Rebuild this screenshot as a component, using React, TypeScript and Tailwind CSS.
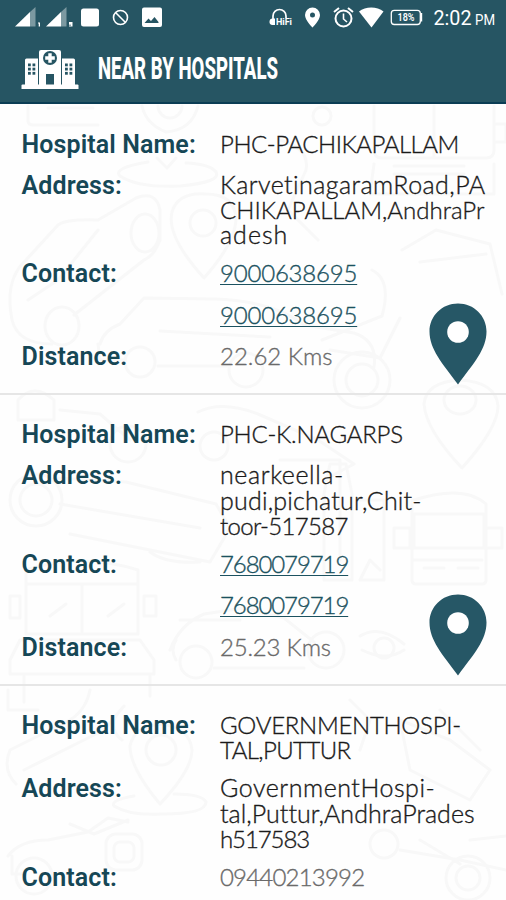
import { type ReactNode } from "react"
import { clsx } from "clsx"

type Line = { text: string; tracking?: string }
type Row = { label: string; lines: Line[]; kind?: "link" | "muted" }
type Hospital = { id: number; rows: Row[]; pin: boolean }

const hospitals: Hospital[] = [
  {
    id: 1,
    pin: true,
    rows: [
      { label: "Hospital Name:", lines: [{ text: "PHC-PACHIKAPALLAM", tracking: "tracking-[-0.480px]" }] },
      {
        label: "Address:",
        lines: [
          { text: "KarvetinagaramRoad,PA", tracking: "text-[25px] tracking-[0.430px]" },
          { text: "CHIKAPALLAM,AndhraPr", tracking: "tracking-[0.020px]" },
          { text: "adesh", tracking: "text-[25px] tracking-[1px]" },
        ],
      },
      { label: "Contact:", kind: "link", lines: [{ text: "9000638695", tracking: "tracking-[-0.200px]" }] },
      { label: "", kind: "link", lines: [{ text: "9000638695", tracking: "tracking-[-0.200px]" }] },
      { label: "Distance:", kind: "muted", lines: [{ text: "22.62 Kms" }] },
    ],
  },
  {
    id: 2,
    pin: true,
    rows: [
      { label: "Hospital Name:", lines: [{ text: "PHC-K.NAGARPS", tracking: "tracking-[-0.250px]" }] },
      {
        label: "Address:",
        lines: [
          { text: "nearkeella-", tracking: "text-[25px] tracking-[0.600px]" },
          { text: "pudi,pichatur,Chit-", tracking: "text-[25px] tracking-[0.200px]" },
          { text: "toor-517587", tracking: "tracking-[-0.650px]" },
        ],
      },
      { label: "Contact:", kind: "link", lines: [{ text: "7680079719", tracking: "tracking-[-1.100px]" }] },
      { label: "", kind: "link", lines: [{ text: "7680079719", tracking: "tracking-[-1.100px]" }] },
      { label: "Distance:", kind: "muted", lines: [{ text: "25.23 Kms", tracking: "tracking-[-0.200px]" }] },
    ],
  },
  {
    id: 3,
    pin: false,
    rows: [
      {
        label: "Hospital Name:",
        lines: [
          { text: "GOVERNMENTHOSPI-", tracking: "tracking-[-0.280px]" },
          { text: "TAL,PUTTUR", tracking: "tracking-[-0.600px]" },
        ],
      },
      {
        label: "Address:",
        lines: [
          { text: "GovernmentHospi-", tracking: "text-[25px] tracking-[0.540px]" },
          { text: "tal,Puttur,AndhraPrades", tracking: "text-[25px] tracking-[0.020px]" },
          { text: "h517583", tracking: "tracking-[-1.100px]" },
        ],
      },
      { label: "Contact:", kind: "muted", lines: [{ text: "09440213992", tracking: "tracking-[-0.800px]" }] },
    ],
  },
]

function StatusBar() {
  return (
    <svg viewBox="0 0 506 36" className="block h-9 w-full" fill="none">
      <g fill="#fff">
        <path d="M15 26.5 30 12v14.5z" />
        <path d="M30 12l5.5-5v19.5H30z" opacity=".4" />
        <path d="M46 26.5 61 12v14.5z" />
        <path d="M61 12l5.5-5v19.5H61z" opacity=".4" />
        <path d="M38 22.5h2v4h-1.3v-3H38zM69 22h3.500v4.500H69v-1h2v-.8h-2z" />
        <rect x="81" y="8.500" width="18" height="18" rx="2.500" />
        <path
          fillRule="evenodd"
          d="M144 7.500h16a2 2 0 0 1 2 2v15.500a2 2 0 0 1-2 2h-16a2 2 0 0 1-2-2V9.500a2 2 0 0 1 2-2zm.5 15.500h14v-1l-4-5-3.500 4-2.500-2.500z"
        />
        <path
          fillRule="evenodd"
          d="M312.500 7.500a7.500 7.500 0 0 0-7.500 7.500c0 5.400 7.500 12.500 7.500 12.500s7.500-7.100 7.500-12.500a7.500 7.500 0 0 0-7.500-7.500zm0 5a2.500 2.500 0 1 1 0 5 2.500 2.500 0 0 1 0-5z"
        />
        <path d="M359 11.500c6.500-5.500 18-5.500 24.500 0L371.500 27.500z" />
        <path d="M420.500 13h1.700v8.500h-1.700z" />
        <path d="M273 18.500h2v6.500h-2.500a3 3 0 0 1 .5-6.500z" />
      </g>
      <g stroke="#fff">
        <circle cx="120.500" cy="17.500" r="7" strokeWidth="1.600" />
        <path d="m115.500 12.500 10 10" strokeWidth="1.600" />
        <path d="M273 20v-4a6.500 6.500 0 0 1 13 0v2" strokeWidth="1.700" />
        <circle cx="343.500" cy="18.500" r="8" strokeWidth="2" />
        <path d="M343.500 13.500v5.500l3.500 3" strokeWidth="1.600" />
        <path d="m334 12 5-4M353 12l-5-4" strokeWidth="2" />
        <rect x="391.300" y="10.300" width="29" height="14.200" rx="3" strokeWidth="1.300" />
      </g>
      <g fill="#fff" fontFamily="Roboto, sans-serif">
        <text x="276" y="24.800" fontSize="8.500" fontWeight="700" textLength="16" lengthAdjust="spacingAndGlyphs">
          HiFi
        </text>
        <text x="397.500" y="21" fontSize="10" fontWeight="600" textLength="17" lengthAdjust="spacingAndGlyphs">
          18%
        </text>
        <text x="433.500" y="25.300" fontSize="20" textLength="38" lengthAdjust="spacingAndGlyphs">
          2:02
        </text>
        <text x="475" y="25.300" fontSize="14" textLength="20" lengthAdjust="spacingAndGlyphs">
          PM
        </text>
      </g>
    </svg>
  )
}

function HospitalIcon() {
  return (
    <svg viewBox="0 0 58 40" className="h-10 w-[58px]" fill="#fff">
      <path d="M18 3a2 2 0 0 1 2-2h18a2 2 0 0 1 2 2v33H18z" />
      <path d="M4 11q0-1.500 1.500-1.500H17V36H4zM41 9.500h11.500Q54 9.500 54 11v25H41z" />
      <path d="M1.500 35.500h55q1 0 1 1V40H.5v-3.500q0-1 1-1z" />
      <circle cx="29" cy="9" r="7" fill="#265563" />
      <path d="M27.300 4.200h3.400v3.100h3.100v3.400h-3.100v3.100h-3.400v-3.100h-3.100V7.300h3.100z" />
      <g fill="#265563">
        <path d="M25 25h8v10.500h-8z" />
        {[14.5, 18.7, 22.9].map((y) => (
          <g key={y}>
            <rect x="7" y={y} width="2.800" height="2.800" />
            <rect x="11.500" y={y} width="2.800" height="2.800" />
            <rect x="44" y={y} width="2.800" height="2.800" />
            <rect x="48.500" y={y} width="2.800" height="2.800" />
          </g>
        ))}
      </g>
    </svg>
  )
}

function Pin() {
  return (
    <svg viewBox="0 0 58 82" className="absolute right-[19.500px] bottom-[8px] h-[82px] w-[58px]">
      <path
        fill="#265766"
        d="M29 .5C13 .5.500 13 .500 28.500.500 46 13 60 29 81.500 45 60 57.500 46 57.500 28.500 57.500 13 45 .500 29 .500z"
      />
      <circle cx="29" cy="29" r="10.800" fill="#fff" />
    </svg>
  )
}

// faint traffic doodles behind the list
function Doodles() {
  return (
    <svg
      viewBox="0 104 506 796"
      className="absolute inset-0 h-full w-full"
      fill="none"
      stroke="#f8f8f8"
      strokeWidth="3"
      strokeLinecap="round"
      strokeLinejoin="round"
    >
      <path d="M28 106v15q0 4 6 4h64M48 108h45M142 106q4 18 24 26 26-2 32-26M158 106a12 12 0 0 0 24 0" />
      <path d="M148 162q-36 6-28 14 18 12 60 10 42-4 36-14-6-8-30-9M157 158l10 10 9-10" />
      <path d="M12 320q-8-40 14-60l32-35q8-6 40-5l38-22q20-8 24 12v30q-6 16-16 20l-70 55M28 300l30-20 40-50M12 320q6 24 40 24" />
      <ellipse cx="62" cy="326" rx="17" ry="19" />
      <ellipse cx="145" cy="233" rx="14" ry="19" />
      <path d="M204 278q-38-42-32-66 6-20 34-18 28 0 30 24 0 24-32 60z" />
      <circle cx="203" cy="223" r="13" />
      <path d="M100 344q4-14 20-20l24-26 70 1q60 2 90 26l50 8q24 8 20 34M160 331l110 6M158 366h70M98 344l2 16h25" />
      <circle cx="140" cy="362" r="15" />
      <circle cx="246" cy="370" r="17" />
      <path d="M374 106v44q0 8 8 8h104q8 0 8-8v-44M434 106v50M374 164l-4 30h124v-30M394 166h70M394 174h70M496 124h10v18h-10" />
      <circle cx="322" cy="116" r="9" />
      <path d="M280 140q30 8 26 30l-18 40 30 30M402 250l34-20 54 14 12 50M420 262l66-8M372 270q20 10 10 46l-60 24M330 350l50 8 20-40" />
      <circle cx="362" cy="380" r="28" />
      <circle cx="362" cy="380" r="16" />
      <path d="M462 468q-36-38-38-64 2-22 36-24 36 2 38 26 0 22-36 62zM476 400a16 14 0 1 1-32 0 16 14 0 0 1 32 0" />
      <path d="M18 400q16-18 36 0v20H18zM60 410l40 4 30 26M198 412q24-12 60 2l60 26 36 24-30 16" />
      <circle cx="128" cy="444" r="18" />
      <circle cx="214" cy="446" r="14" />
      <circle cx="36" cy="500" r="26" />
      <circle cx="36" cy="500" r="16" />
      <path d="M56 478l70 4 90 22 14 24-20 34-140-28M60 504l140 24M150 552q16 12 50 10" />
      <path d="M330 464h16l6 30v86h-28v-86zM280 460h60v100M360 500h24v80h-24l10-20 10 10" />
      <path d="M414 500q50-16 72 4v76q0 4-4 4h-66q-4 0-4-4v-80M414 514h70v34h-70zM412 560h70M424 568h20M458 568h20M394 528h16v20h-16zM488 528h14v20h-14" />
      <path d="M26 570q54-18 112 0v64H26zM82 584v48M26 584h112M50 616l16-12M108 616l16-12M10 596h10v22H10zM144 596h12v20h-12zM20 640h120l14 20v14H10v-14zM24 676v26M150 676v20" />
      <path d="M170 650q10-26 34-36l40-6 40 10 30 24M180 620h60M176 660q-6-10 0-20M214 668h90" />
      <circle cx="196" cy="662" r="16" />
      <circle cx="326" cy="650" r="18" />
      <path d="M360 636q20-12 44 8M362 650q24 12 42 0" />
      <circle cx="384" cy="648" r="10" />
      <path d="M8 690v20h30M90 690q-4 20-20 30l-60 30q-8 20 6 34M24 770l80-40 20-24M116 716a18 18 0 0 0 6 24" />
      <path d="M160 804q-30-36-30-58 4-20 32-22 28 4 30 26 0 20-32 54zM176 750a15 15 0 1 1-30 0 15 15 0 0 1 30 0" />
      <path d="M134 796q-24 4-20 10 16 10 48 8 44 0 44-12-4-8-32-8" />
      <path d="M8 856q12-16 40-16l40-8 20-14 20 4M70 824l24 10 34-14M12 856v18h14" />
      <circle cx="34" cy="876" r="18" />
      <rect x="106" y="834" width="36" height="36" rx="10" />
      <rect x="114" y="842" width="20" height="20" rx="6" />
      <path d="M400 720l50 20 40 30-20 30-60-30zM440 710l40 40M350 700l20 20-10 30M400 850l60 10 46 10M420 840l40 24M470 840l36-4" />
      <circle cx="384" cy="844" r="14" />
      <circle cx="468" cy="878" r="22" />
      <circle cx="468" cy="878" r="12" />
    </svg>
  )
}

function InfoRow({ row }: { row: Row }) {
  return (
    <div className="mb-[12.900px] grid min-h-[28.300px] grid-cols-[198.500px_1fr]">
      <span className="text-[25px] leading-[28.300px] font-semibold tracking-[0.100px] text-[#164756]">
        {row.label}
      </span>
      <div
        className={clsx(
          "font-[Lato,sans-serif] text-[24px] leading-[25.300px] font-light whitespace-nowrap [-webkit-text-stroke:0.350px_currentColor]",
          row.kind === "link" && "text-[#1c5260]",
          row.kind === "muted" && "text-[#6a6a6a]",
          !row.kind && "text-[#1a1a1a]",
        )}
      >
        {row.lines.map((line) => (
          <div key={line.text} className="h-[25.300px]">
            <span
              className={clsx(
                line.tracking,
                row.kind === "link" && "underline decoration-1 underline-offset-2",
              )}
            >
              {line.text}
            </span>
          </div>
        ))}
      </div>
    </div>
  )
}

function Card({ children, pin }: { children: ReactNode; pin: boolean }) {
  return (
    <article className="relative h-[290.700px] shrink-0 border-b-2 border-[#e6e6e6] pt-[26px] pl-[21.500px]">
      {children}
      {pin && <Pin />}
    </article>
  )
}

export default function App() {
  return (
    <div className="flex h-[900px] w-[506px] flex-col overflow-hidden bg-[#fefefe] font-[Roboto,sans-serif]">
      <header className="h-[104px] shrink-0 border-b-2 border-[#0b3d54] bg-[#265563]">
        <StatusBar />
        <div className="flex items-center pt-[13px] pl-[21px]">
          <HospitalIcon />
          <h1 className="ml-[18.500px] origin-left scale-x-[0.600] text-[31px] leading-10 font-extrabold whitespace-nowrap text-white">
            NEAR BY HOSPITALS
          </h1>
        </div>
      </header>
      <main className="relative flex-1 overflow-hidden">
        <Doodles />
        <div className="relative flex flex-col pt-[0.500px]">
          {hospitals.map((h) => (
            <Card key={h.id} pin={h.pin}>
              {h.rows.map((row, i) => (
                <InfoRow key={i} row={row} />
              ))}
            </Card>
          ))}
        </div>
      </main>
    </div>
  )
}
